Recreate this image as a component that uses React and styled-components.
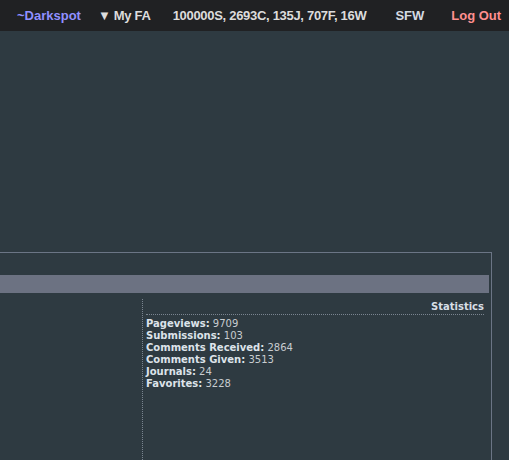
import React from "react";
import styled, { createGlobalStyle } from "styled-components";

const Global = createGlobalStyle`
  html, body { margin: 0; padding: 0; background: #2e3a41; overflow: hidden; }
  body { width: 509px; height: 460px; }
`;

const TopBar = styled.nav`
  height: 31px;
  background: #202123;
  display: flex;
  align-items: center;
  padding-left: 17px;
  font-family: "Liberation Sans", Arial, sans-serif;
  font-weight: bold;
  font-size: 13px;
  white-space: nowrap;
`;

const NavItem = styled.span`
  color: ${(p) => p.$color || "#dcdcdc"};
  margin-left: ${(p) => p.$ml || 0}px;
  letter-spacing: ${(p) => p.$ls || 0}px;
`;

const Panel = styled.section`
  margin: 221px 17px 0 -300px;
  border: 1px solid #6b7585;
  border-bottom: none;
  padding-top: 22px;
  height: 208px;
  box-sizing: border-box;
  display: flex;
  flex-direction: column;
`;

const TitleBar = styled.div`
  height: 18px;
  flex: none;
  background: #6c7282;
  margin-right: 2px;
`;

const Columns = styled.div`
  flex: 1;
  display: grid;
  grid-template-columns: 442px 1fr;
  margin-top: 6px;
`;

const LeftCol = styled.div`
  border-right: 1px dotted #7a8490;
`;

const RightCol = styled.div`
  padding: 0 7px 0 3px;
  font-family: "DejaVu Sans", Verdana, sans-serif;
  font-size: 10px;
  color: #c8ccd0;
`;

const Heading = styled.div`
  text-align: right;
  font-weight: bold;
  color: #d8dfe6;
  padding-top: 2px;
  padding-bottom: 1px;
  border-bottom: 1px dotted #7a8490;
  margin-bottom: 3px;
  line-height: 12px;
`;

const StatRow = styled.div`
  line-height: 12px;
  white-space: nowrap;
`;

const Label = styled.b`
  color: #dde3ea;
`;

const stats = [
  ["Pageviews", "9709"],
  ["Submissions", "103"],
  ["Comments Received", "2864"],
  ["Comments Given", "3513"],
  ["Journals", "24"],
  ["Favorites", "3228"],
];

export default function App() {
  return (
    <>
      <Global />
      <TopBar>
        <NavItem $color="#9090ff">~Darkspot</NavItem>
        <NavItem $ml={17} $ls={-0.3}>▼ My FA</NavItem>
        <NavItem $ml={22} $ls={-0.3}>100000S, 2693C, 135J, 707F, 16W</NavItem>
        <NavItem $ml={29} $color="#d4dae2">SFW</NavItem>
        <NavItem $ml={27} $color="#ff8f8f">Log Out</NavItem>
      </TopBar>
      <Panel>
        <TitleBar />
        <Columns>
          <LeftCol />
          <RightCol>
            <Heading>Statistics</Heading>
            {stats.map(([k, v]) => (
              <StatRow key={k}>
                <Label>{k}:</Label> {v}
              </StatRow>
            ))}
          </RightCol>
        </Columns>
      </Panel>
    </>
  );
}
